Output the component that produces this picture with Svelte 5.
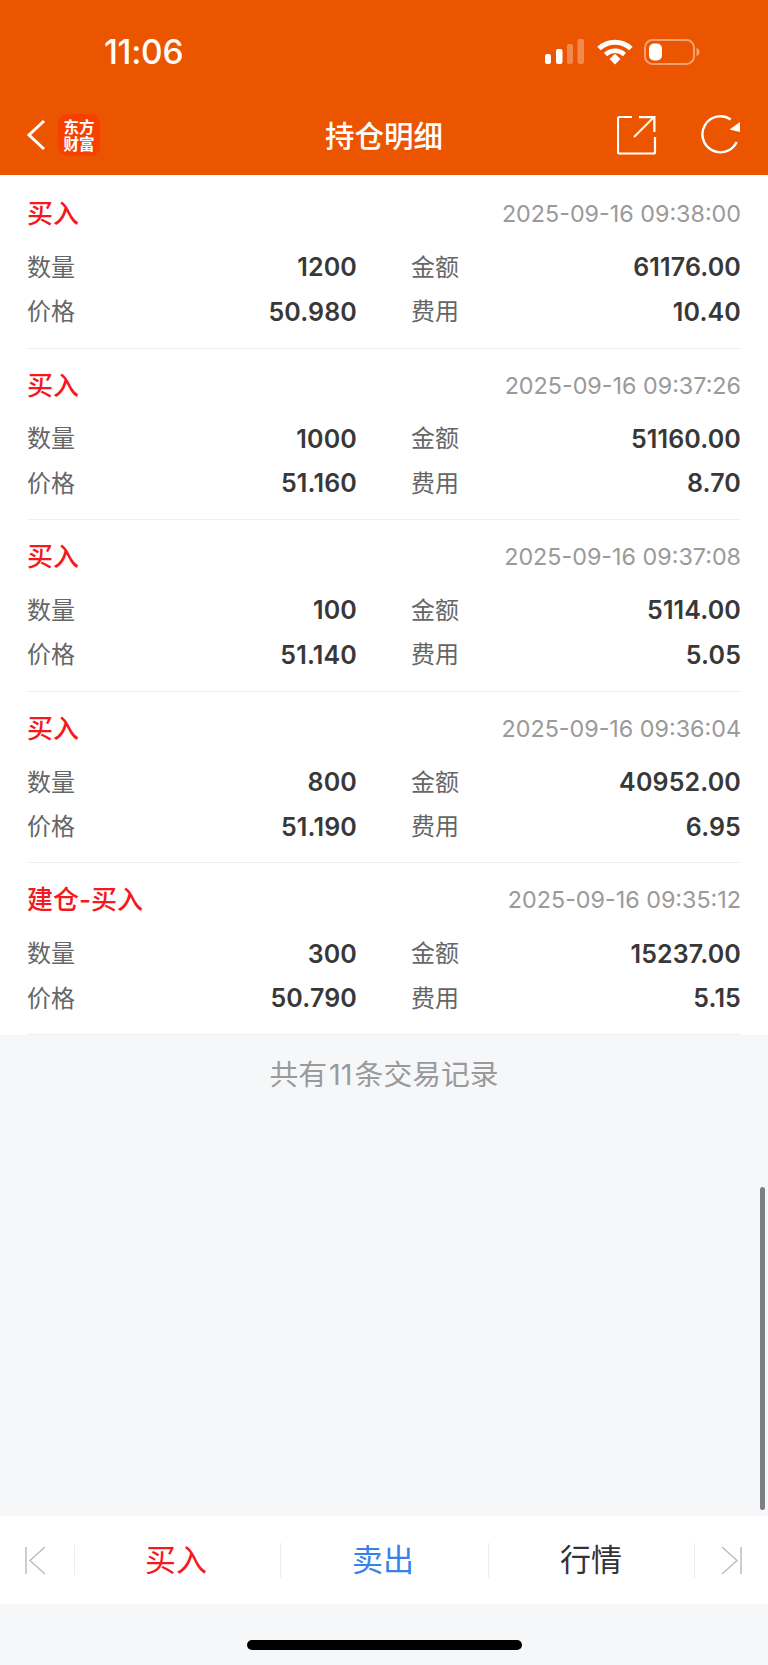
<script>
  const records = [
    { type: '买入', time: '2025-09-16 09:38:00', qty: '1200', amount: '61176.00', price: '50.980', fee: '10.40' },
    { type: '买入', time: '2025-09-16 09:37:26', qty: '1000', amount: '51160.00', price: '51.160', fee: '8.70' },
    { type: '买入', time: '2025-09-16 09:37:08', qty: '100', amount: '5114.00', price: '51.140', fee: '5.05' },
    { type: '买入', time: '2025-09-16 09:36:04', qty: '800', amount: '40952.00', price: '51.190', fee: '6.95' },
    { type: '建仓-买入', time: '2025-09-16 09:35:12', qty: '300', amount: '15237.00', price: '50.790', fee: '5.15' }
  ];
</script>

<div class="page">
  <header class="header">
    <div class="status">
      <span class="clock">11:06</span>
      <div class="status-icons">
        <svg width="39" height="26" viewBox="0 0 39 26">
          <rect x="0" y="15" width="6" height="10" rx="2" fill="#fff" />
          <rect x="11" y="10" width="6.500" height="15" rx="2" fill="#fff" />
          <rect x="22" y="5" width="6" height="20" rx="2" fill="#fff" opacity="0.3" />
          <rect x="32.500" y="0" width="6.500" height="25" rx="2" fill="#fff" opacity="0.3" />
        </svg>
        <svg class="wifi" width="36" height="26" viewBox="0 0 36 26">
          <path d="M2 9.500C11 1 25 1 34 9.500" fill="none" stroke="#fff" stroke-width="5" />
          <path d="M8.500 15.500C14 10.500 22 10.500 27.500 15.500" fill="none" stroke="#fff" stroke-width="4.500" />
          <path d="M12.500 20L18 14.800 23.500 20 18 25.500Z" fill="#fff" />
        </svg>
        <svg class="battery" width="56" height="26" viewBox="0 0 56 26">
          <rect x="1" y="1" width="49" height="24" rx="7.500" fill="none" stroke="#fff" stroke-opacity="0.45" stroke-width="2" />
          <rect x="5" y="4.500" width="13" height="17" rx="5" fill="#fff" />
          <path d="M52.500 9c2 .5 3 2 3 4s-1 3.500-3 4Z" fill="#fff" opacity="0.45" />
        </svg>
      </div>
    </div>
    <div class="nav">
      <svg class="back" width="20" height="32" viewBox="0 0 20 32">
        <path d="M18 2 3 16 18 30" fill="none" stroke="#fff" stroke-width="3" />
      </svg>
      <div class="logo">东方<br />财富</div>
      <h1 class="title">持仓明细</h1>
      <svg class="share" width="40" height="40" viewBox="0 0 40 40">
        <path d="M15 2H2.500Q1 2 1 3.500V37Q1 38.500 2.500 38.500H36.500Q38 38.500 38 37V22" fill="none" stroke="#fff" stroke-width="2.200" />
        <path d="M17 22 37 2" fill="none" stroke="#fff" stroke-width="2" />
        <path d="M22 1H38.500V17H36.300V3.200H22Z" fill="#fff" />
      </svg>
      <svg class="refresh" width="40" height="40" viewBox="0 0 40 40">
        <path d="M35.700 27A18 18 0 1 1 29.700 4.500" fill="none" stroke="#fff" stroke-width="2.400" />
        <path d="M39 7V17L28.500 14.500Z" fill="#fff" />
      </svg>
    </div>
  </header>

  <main class="list">
    {#each records as r}
      <section class="record">
        <div class="record-head">
          <span class="type">{r.type}</span>
          <span class="time">{r.time}</span>
        </div>
        <div class="fields">
          <div class="field"><span class="label">数量</span><span class="value">{r.qty}</span></div>
          <div class="field"><span class="label">金额</span><span class="value">{r.amount}</span></div>
          <div class="field"><span class="label">价格</span><span class="value">{r.price}</span></div>
          <div class="field"><span class="label">费用</span><span class="value">{r.fee}</span></div>
        </div>
      </section>
    {/each}
  </main>

  <p class="summary">共有 11 条交易记录</p>

  <nav class="toolbar">
    <div class="tool edge">
      <svg class="first" width="21" height="29" viewBox="0 0 21 29">
        <path d="M1 1V28M20 1 5 14.500 20 28" fill="none" stroke="#bdbdbd" stroke-width="1.500" />
      </svg>
    </div>
    <div class="tool buy">买入</div>
    <div class="tool sell">卖出</div>
    <div class="tool quote">行情</div>
    <div class="tool edge last">
      <svg width="21" height="29" viewBox="0 0 21 29">
        <path d="M20 1V28M1 1 16 14.500 1 28" fill="none" stroke="#bdbdbd" stroke-width="1.500" />
      </svg>
    </div>
  </nav>

  <div class="home-area"><div class="home-bar"></div></div>
  <div class="scrollbar"></div>
</div>

<style>
  :global(body) {
    margin: 0;
    background: #f6f7f9;
  }

  .page {
    position: relative;
    width: 768px;
    height: 1665px;
    overflow: hidden;
    display: flex;
    flex-direction: column;
    background: #f6f7f9;
    font-family: Inter, "Noto Sans CJK SC", sans-serif;
  }

  .header {
    height: 175px;
    flex: none;
    background: #ec5500;
    color: #fff;
  }

  .status {
    height: 100px;
    display: flex;
    align-items: center;
    justify-content: space-between;
    padding: 4px 68px 0 104px;
    box-sizing: border-box;
  }

  .clock {
    font-size: 33.500px;
    font-weight: 500;
    letter-spacing: -0.3px;
  }

  .status-icons {
    display: flex;
    align-items: center;
  }

  .wifi {
    margin-left: 13px;
  }

  .battery {
    margin-left: 11px;
  }

  .nav {
    position: relative;
    height: 70px;
    display: flex;
    align-items: center;
    padding: 0 27px 0 26px;
  }

  .back {
    flex: none;
  }

  .logo {
    width: 42px;
    height: 42px;
    margin-left: 12px;
    border-radius: 9px;
    background: #f54000;
    box-sizing: border-box;
    padding-top: 4px;
    text-align: center;
    font-family: "Noto Sans CJK SC", sans-serif;
    font-size: 15.500px;
    font-weight: 700;
    line-height: 17px;
  }

  .title {
    position: absolute;
    left: 0;
    right: 0;
    top: 14px;
    margin: 0;
    text-align: center;
    font-family: "Noto Sans CJK SC", sans-serif;
    font-size: 29.500px;
    font-weight: 500;
    line-height: 40px;
    pointer-events: none;
  }

  .share {
    margin-left: auto;
  }

  .refresh {
    margin-left: 44px;
  }

  .list {
    flex: none;
    background: #fff;
    padding-top: 2px;
  }

  .record {
    height: 171.600px;
    box-sizing: border-box;
    margin: 0 27px;
    border-bottom: 1px solid #f0f0f0;
  }

  .record-head {
    height: 60px;
    padding-top: 9px;
    box-sizing: border-box;
    display: flex;
    align-items: center;
    justify-content: space-between;
  }

  .type {
    color: #f5181c;
    font-size: 26px;
    font-weight: 500;
  }

  .time {
    color: #9a9a9a;
    font-size: 23.300px;
    margin-top: 4px;
  }

  .fields {
    display: grid;
    grid-template-columns: 330px 330px;
    column-gap: 54px;
    grid-auto-rows: 44.500px;
    margin-top: 6px;
  }

  .field {
    display: flex;
    align-items: center;
    justify-content: space-between;
  }

  .label {
    color: #666;
    font-family: "Noto Sans CJK SC", sans-serif;
    font-size: 24px;
  }

  .value {
    color: #383838;
    font-size: 25px;
    font-weight: 600;
    letter-spacing: 0.15px;
    padding-top: 4px;
  }

  .summary {
    margin: -1px 0 0;
    height: 78px;
    flex: none;
    display: flex;
    align-items: center;
    justify-content: center;
    color: #9a9a9a;
    font-size: 28.800px;
    word-spacing: -6px;
  }

  .toolbar {
    margin-top: auto;
    height: 88px;
    flex: none;
    margin-bottom: 61px;
    display: grid;
    grid-template-columns: 75px 206px 208px 206px 73px;
    background: #fff;
    font-family: "Noto Sans CJK SC", sans-serif;
    font-size: 31px;
    align-items: center;
  }

  .tool {
    height: 30px;
    display: flex;
    align-items: center;
    justify-content: center;
    border-right: 1px solid #ececec;
  }

  .first {
    margin-left: -4px;
  }

  .last {
    border-right: none;
  }

  .buy {
    color: #f5181c;
    padding-right: 3px;
    padding-bottom: 5px;
  }

  .sell {
    color: #3583ea;
    padding-right: 3px;
    padding-bottom: 5px;
  }

  .quote {
    color: #333;
    padding-right: 1px;
    padding-bottom: 5px;
  }

  .home-area {
    position: absolute;
    left: 0;
    right: 0;
    bottom: 15px;
    display: flex;
    justify-content: center;
  }

  .home-bar {
    width: 275px;
    height: 10px;
    border-radius: 5px;
    background: #000;
  }

  .scrollbar {
    position: absolute;
    right: 3px;
    top: 1187px;
    width: 5px;
    height: 323px;
    border-radius: 3px;
    background: #7d7f82;
  }
</style>
